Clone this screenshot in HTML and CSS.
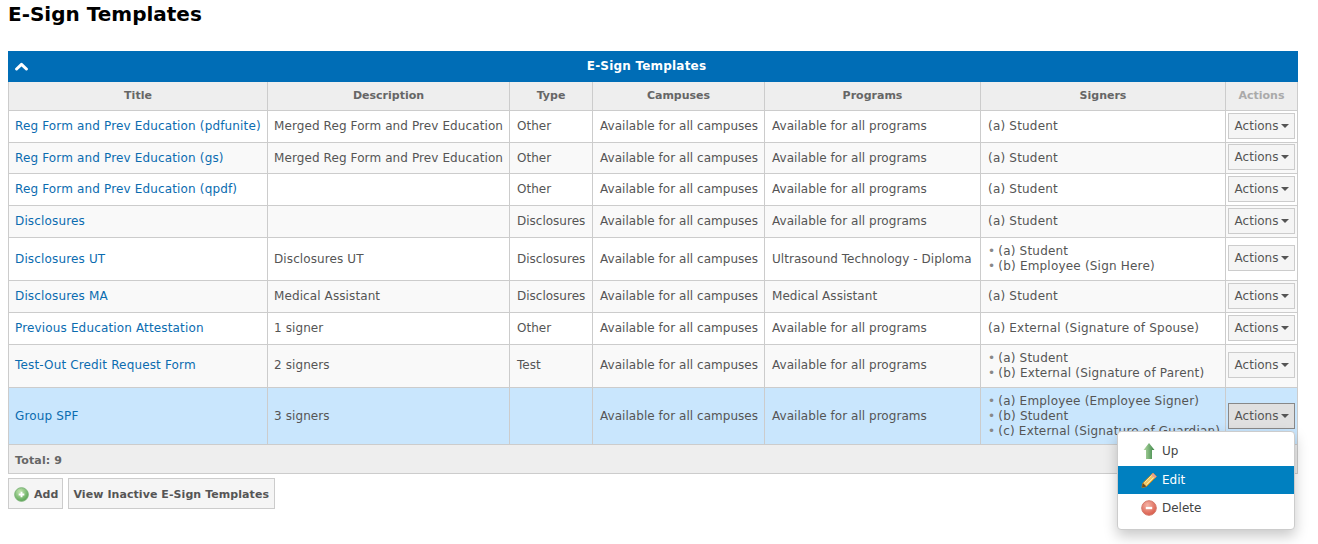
FILE: index.html
```html
<!DOCTYPE html>
<html lang="en">
<head>
<meta charset="utf-8">
<title>E-Sign Templates</title>
<link rel="stylesheet" href="styles.css">
</head>
<body>
<h1 class="page-title">E-Sign Templates</h1>
<section class="panel">
  <div class="panel-bar">
    <svg class="collapse-icon" viewBox="0 0 13 9" width="13" height="9"><path d="M1.6 7 L6.5 2.4 L11.4 7" fill="none" stroke="#fff" stroke-width="3" stroke-linecap="round" stroke-linejoin="round"/></svg>
    <span>E-Sign Templates</span>
  </div>
  <table class="grid">
    <colgroup>
      <col class="c-title"><col class="c-desc"><col class="c-type"><col class="c-camp"><col class="c-prog"><col class="c-sign"><col class="c-act">
    </colgroup>
    <thead>
      <tr><th>Title</th><th>Description</th><th>Type</th><th>Campuses</th><th>Programs</th><th>Signers</th><th class="muted">Actions</th></tr>
    </thead>
    <tbody>
      <tr class="h32"><td><a href="#">Reg Form and Prev Education (pdfunite)</a></td><td>Merged Reg Form and Prev Education</td><td>Other</td><td>Available for all campuses</td><td>Available for all programs</td><td>(a) Student</td><td class="act"><button class="act-btn">Actions<i class="caret"></i></button></td></tr>
      <tr class="alt nudge lift"><td><a href="#">Reg Form and Prev Education (gs)</a></td><td>Merged Reg Form and Prev Education</td><td>Other</td><td>Available for all campuses</td><td>Available for all programs</td><td>(a) Student</td><td class="act"><button class="act-btn">Actions<i class="caret"></i></button></td></tr>
      <tr class="h32"><td><a href="#">Reg Form and Prev Education (qpdf)</a></td><td></td><td>Other</td><td>Available for all campuses</td><td>Available for all programs</td><td>(a) Student</td><td class="act"><button class="act-btn">Actions<i class="caret"></i></button></td></tr>
      <tr class="alt h32"><td><a href="#">Disclosures</a></td><td></td><td>Disclosures</td><td>Available for all campuses</td><td>Available for all programs</td><td>(a) Student</td><td class="act"><button class="act-btn">Actions<i class="caret"></i></button></td></tr>
      <tr class="nudge lift"><td><a href="#">Disclosures UT</a></td><td>Disclosures UT</td><td>Disclosures</td><td>Available for all campuses</td><td>Ultrasound Technology - Diploma</td><td class="list"><ul class="signers"><li>(a) Student</li><li>(b) Employee (Sign Here)</li></ul></td><td class="act"><button class="act-btn">Actions<i class="caret"></i></button></td></tr>
      <tr class="alt h32"><td><a href="#">Disclosures MA</a></td><td>Medical Assistant</td><td>Disclosures</td><td>Available for all campuses</td><td>Medical Assistant</td><td>(a) Student</td><td class="act"><button class="act-btn">Actions<i class="caret"></i></button></td></tr>
      <tr class="h32"><td><a href="#">Previous Education Attestation</a></td><td>1 signer</td><td>Other</td><td>Available for all campuses</td><td>Available for all programs</td><td>(a) External (Signature of Spouse)</td><td class="act"><button class="act-btn">Actions<i class="caret"></i></button></td></tr>
      <tr class="alt lift"><td><a href="#">Test-Out Credit Request Form</a></td><td>2 signers</td><td>Test</td><td>Available for all campuses</td><td>Available for all programs</td><td class="list"><ul class="signers"><li>(a) Student</li><li>(b) External (Signature of Parent)</li></ul></td><td class="act"><button class="act-btn">Actions<i class="caret"></i></button></td></tr>
      <tr class="selected nudge"><td><a href="#">Group SPF</a></td><td>3 signers</td><td></td><td>Available for all campuses</td><td>Available for all programs</td><td class="list"><ul class="signers"><li>(a) Employee (Employee Signer)</li><li>(b) Student</li><li>(c) External (Signature of Guardian)</li></ul></td><td class="act"><button class="act-btn open">Actions<i class="caret"></i></button></td></tr>
    </tbody>
    <tfoot>
      <tr><td colspan="7">Total: 9</td></tr>
    </tfoot>
  </table>
  <div class="toolbar">
    <button class="tool-btn add">
      <svg class="ico" viewBox="0 0 16 16" width="15" height="15"><defs><radialGradient id="gAdd" cx=".4" cy=".3" r=".8"><stop offset="0" stop-color="#c4e6b2"/><stop offset="1" stop-color="#4c9c48"/></radialGradient></defs><circle cx="8" cy="8" r="7.3" fill="url(#gAdd)" stroke="#7ab275"/><path d="M8 5v6M5 8h6" stroke="#fff" stroke-width="2"/></svg>
      Add
    </button>
    <button class="tool-btn">View Inactive E-Sign Templates</button>
  </div>
</section>
<div class="menu">
  <div class="menu-item first">
    <svg class="ico" viewBox="0 0 16 18" width="16" height="18"><defs><linearGradient id="gUp" x1="0" x2="1" y1="0" y2="0"><stop offset="0" stop-color="#b6dba6"/><stop offset="1" stop-color="#3c8647"/></linearGradient></defs><path d="M8 1 L13.5 8 H11 V17 H5 V8 H2.5 Z" fill="url(#gUp)"/></svg>
    <span>Up</span>
  </div>
  <div class="menu-item active">
    <svg class="ico" viewBox="0 0 16 16" width="16" height="16"><path d="M12 1 L15.5 4.5 L5.5 14.5 L1 15.5 L1.8 11 Z" fill="#f0c765" stroke="#b98a2c"/><path d="M3.5 10.5 L11 3 M5.5 12.5 L13 5" stroke="#fbe7a8" stroke-width="1"/><path d="M1.8 11 L5.5 14.5 L1 15.5 Z" fill="#6b4a1d"/><path d="M12 1 L15.5 4.5 L13.6 6.4 L10.1 2.9 Z" fill="#e6a090"/></svg>
    <span>Edit</span>
  </div>
  <div class="menu-item">
    <svg class="ico" viewBox="0 0 16 16" width="16" height="16"><defs><radialGradient id="gDel" cx=".4" cy=".3" r=".8"><stop offset="0" stop-color="#f5b3a5"/><stop offset="1" stop-color="#d6503f"/></radialGradient></defs><circle cx="8" cy="8" r="7.3" fill="url(#gDel)" stroke="#d47a6c"/><path d="M4.8 8h6.4" stroke="#fff" stroke-width="2.4"/></svg>
    <span>Delete</span>
  </div>
</div>
</body>
</html>
```
FILE: styles.css
```css
* { box-sizing: border-box; }
html, body { margin: 0; padding: 0; }
body {
  padding: 0 8px;
  font-family: "DejaVu Sans", Verdana, sans-serif;
  font-size: 12px;
  color: #555;
  background: #fff;
  position: relative;
  height: 544px;
  overflow: hidden;
}
.page-title {
  margin: 0;
  padding-top: 2px;
  height: 51px;
  font-size: 20px;
  line-height: 24px;
  font-weight: bold;
  color: #000;
}
.panel { width: 1290px; }
.panel-bar {
  height: 31px;
  padding: 0 13px 2px 0;
  background: #006db6;
  color: #fff;
  font-weight: bold;
  letter-spacing: .2px;
  display: flex;
  align-items: center;
  justify-content: center;
  position: relative;
}
.collapse-icon { position: absolute; left: 7px; top: 11px; }
.grid {
  width: 1289px;
  table-layout: fixed;
  border-collapse: collapse;
  border: 1px solid #ccc;
  border-top: 0;
}
.c-title { width: 259px; }
.c-desc { width: 242px; }
.c-type { width: 83px; }
.c-camp { width: 172px; }
.c-prog { width: 216px; }
.c-sign { width: 245px; }
.c-act { width: 72px; }
.grid th {
  height: 28px;
  padding: 0 2px;
  background: #eee;
  border: 1px solid #ccc;
  border-top: 0;
  font-size: 11px;
  font-weight: bold;
  color: #666;
  text-align: center;
}
.grid th.muted { color: #aaa; }
.grid td {
  height: 31px;
  padding: 0 6px;
  border: 1px solid #ccc;
  line-height: 15px;
  letter-spacing: .1px;
  white-space: nowrap;
  vertical-align: middle;
}
.grid td:nth-child(1) { letter-spacing: .15px; }
.grid td:nth-child(n+3) { padding-left: 7px; }
.grid td:nth-child(3) { letter-spacing: 0; }
.grid td:nth-child(4),
.grid td:nth-child(5) { letter-spacing: .04px; }
.grid td:nth-child(6) { letter-spacing: .2px; }
.grid tr.h32 td { height: 32px; }
.grid tr.alt td { background: #f9f9f9; }
.grid tr.selected td { background: #c9e6fd; }
.grid tr.nudge td { padding-top: 1px; }
.grid tr.nudge td.list { padding-top: 0; }
.grid td.act,
.grid tr.nudge td.act { padding: 0 2px; text-align: center; letter-spacing: 0; }
.grid tr.lift td.act { padding-bottom: 1px; }
.grid a { color: #0b6cb0; text-decoration: none; }
.grid tfoot td {
  height: 29px;
  background: #eee;
  font-size: 11px;
  font-weight: bold;
  letter-spacing: .2px;
  color: #666;
  padding-top: 3px;
}
.signers { list-style: none; margin: 0; padding: 6px 0; }
.signers li::before { content: "•"; color: #888; margin-right: 3px; }
.selected .signers { padding: 6px 0 5px; }
.act-btn {
  height: 26px;
  width: 67px;
  padding: 0 0 0 1px;
  font: 12px "DejaVu Sans", Verdana, sans-serif;
  color: #555;
  background: #f5f5f5;
  border: 1px solid #ccc;
  display: inline-flex;
  align-items: center;
  justify-content: center;
  vertical-align: middle;
}
.act-btn.open { background: #e0e0e0; border-color: #888; }
.caret {
  display: inline-block;
  width: 0;
  height: 0;
  margin-left: 3px;
  border-left: 4px solid transparent;
  border-right: 4px solid transparent;
  border-top: 4px solid #555;
}
.toolbar { display: flex; gap: 5px; padding-top: 4px; }
.tool-btn {
  height: 31px;
  padding: 2px 5px 0 4px;
  display: inline-flex;
  align-items: center;
  gap: 5px;
  font: bold 11px "DejaVu Sans", Verdana, sans-serif;
  letter-spacing: .07px;
  color: #555;
  background: #f5f5f5;
  border: 1px solid #ccc;
}
.tool-btn.add { padding: 2px 4px 0 5px; }
.menu {
  position: absolute;
  left: 1117px;
  top: 431px;
  width: 178px;
  height: 99px;
  padding-top: 5px;
  background: #fff;
  border: 1px solid #ccc;
  border-radius: 4px;
  box-shadow: 0 6px 14px rgba(0,0,0,.22);
}
.menu-item {
  height: 28px;
  display: flex;
  align-items: center;
  gap: 5px;
  padding-left: 23px;
  color: #444;
}
.menu-item.first { height: 29px; padding-bottom: 1px; }
.menu-item .ico { flex: none; width: 16px; }
.menu-item.active { background: #0080c0; color: #fff; }
```
